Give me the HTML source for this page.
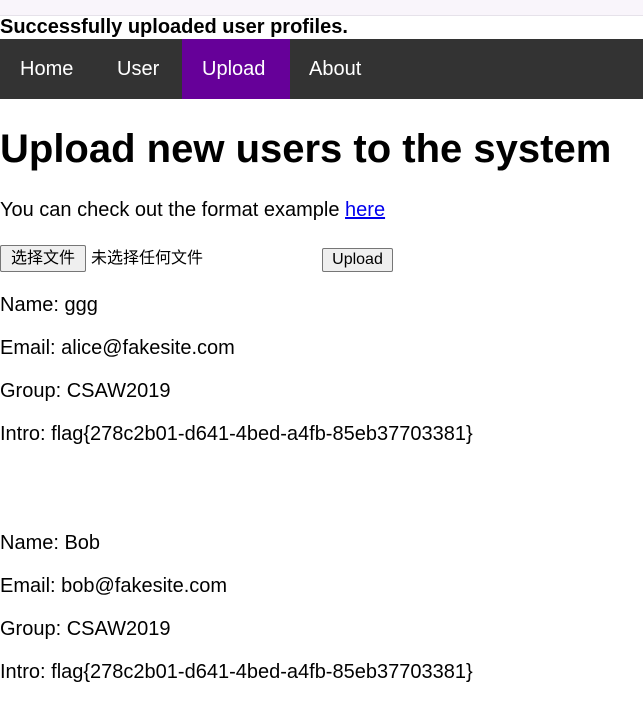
<!DOCTYPE html>
<html><head><meta charset="utf-8"><style>
body{margin:0;width:643px;height:703px;overflow:hidden;background:#fff;font-family:"Liberation Sans","Noto Sans CJK SC",sans-serif;color:#000;position:relative}
.a{position:absolute;white-space:nowrap}
.t{font-size:20px;line-height:22px;left:0}
.btn{position:absolute;border:1px solid #767676;border-radius:2px;background:#efefef;font-size:16px;line-height:20px;text-align:center;box-sizing:border-box}
</style></head><body>
<div class="a" style="left:0;top:0;width:643px;height:15px;background:#f9f5fb;border-bottom:1px solid #e6e2ea"></div>
<div class="a" style="left:0;top:16px;font-size:20px;font-weight:bold;line-height:22px">Successfully uploaded user profiles.</div>
<div class="a" style="left:0;top:39px;width:643px;height:60px;background:#333"></div>
<div class="a" style="left:182px;top:39px;width:108px;height:60px;background:#660099"></div>
<div class="a" style="left:20px;top:57px;color:#fff;font-size:20px;line-height:24px">Home</div>
<div class="a" style="left:117px;top:57px;color:#fff;font-size:20px;line-height:24px">User</div>
<div class="a" style="left:202px;top:57px;color:#fff;font-size:20px;line-height:24px">Upload</div>
<div class="a" style="left:309px;top:57px;color:#fff;font-size:20px;line-height:24px">About</div>
<div class="a" style="left:0;top:125px;font-size:40px;font-weight:bold;line-height:48px">Upload new users to the system</div>
<div class="a t" style="top:199px">You can check out the format example <span style="color:#0000ee;text-decoration:underline">here</span></div>
<div class="btn" style="left:0;top:245px;width:86px;height:27px;line-height:25px">选择文件</div>
<div class="a" style="left:91px;top:248px;font-size:16px;line-height:22px">未选择任何文件</div>
<div class="btn" style="left:322px;top:248px;width:71px;height:24px;line-height:22px">Upload</div>
<div class="a t" style="top:294px">Name: ggg</div>
<div class="a t" style="top:337px">Email: alice@fakesite.com</div>
<div class="a t" style="top:380px">Group: CSAW2019</div>
<div class="a t" style="top:423px">Intro: flag{278c2b01-d641-4bed-a4fb-85eb37703381}</div>
<div class="a t" style="top:532px">Name: Bob</div>
<div class="a t" style="top:575px">Email: bob@fakesite.com</div>
<div class="a t" style="top:618px">Group: CSAW2019</div>
<div class="a t" style="top:661px">Intro: flag{278c2b01-d641-4bed-a4fb-85eb37703381}</div>
</body></html>
